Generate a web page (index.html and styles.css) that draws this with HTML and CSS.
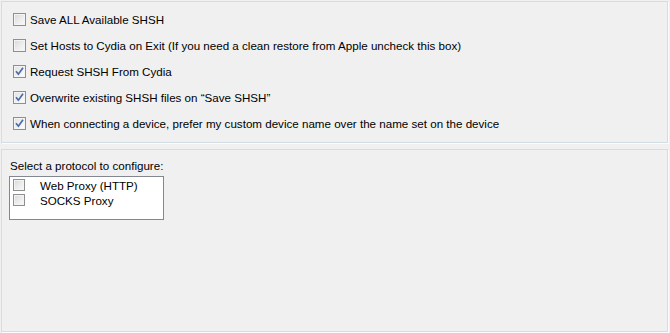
FILE: index.html
```html
<!DOCTYPE html>
<html>
<head>
<meta charset="utf-8">
<link rel="stylesheet" href="styles.css">
</head>
<body>
<div class="page">
  <section class="panel options">
    <label class="row"><span class="cb"></span><span class="txt">Save ALL Available SHSH</span></label>
    <label class="row"><span class="cb"></span><span class="txt">Set Hosts to Cydia on Exit (If you need a clean restore from Apple uncheck this box)</span></label>
    <label class="row"><span class="cb on"><svg viewBox="0 0 11 11" width="11" height="11"><path d="M2 5.2 L4.4 8.2 L9 1.8" fill="none" stroke="#4a6aa8" stroke-width="1.7" stroke-linejoin="miter"/></svg></span><span class="txt">Request SHSH From Cydia</span></label>
    <label class="row"><span class="cb on"><svg viewBox="0 0 11 11" width="11" height="11"><path d="M2 5.2 L4.4 8.2 L9 1.8" fill="none" stroke="#4a6aa8" stroke-width="1.7" stroke-linejoin="miter"/></svg></span><span class="txt">Overwrite existing SHSH files on “Save SHSH”</span></label>
    <label class="row"><span class="cb on"><svg viewBox="0 0 11 11" width="11" height="11"><path d="M2 5.2 L4.4 8.2 L9 1.8" fill="none" stroke="#4a6aa8" stroke-width="1.7" stroke-linejoin="miter"/></svg></span><span class="txt">When connecting a device, prefer my custom device name over the name set on the device</span></label>
  </section>
  <section class="panel proxy">
    <div class="caption">Select a protocol to configure:</div>
    <div class="listbox">
      <div class="item"><span class="cb small"></span><span class="txt">Web Proxy (HTTP)</span></div>
      <div class="item"><span class="cb small"></span><span class="txt">SOCKS Proxy</span></div>
    </div>
  </section>
</div>
</body>
</html>
```
FILE: styles.css
```css
html, body {
  margin: 0;
  padding: 0;
  background: #f0f0f0;
}
body {
  width: 670px;
  height: 333px;
  overflow: hidden;
  font-family: "Liberation Sans", Arial, sans-serif;
  font-size: 11.6px;
  color: #000;
}
.page {
  display: flex;
  flex-direction: column;
  gap: 6px;
  padding: 1px 2px 0 1px;
}
.panel {
  box-sizing: border-box;
  width: 667px;
  border: 1px solid #d3dde4;
  background: #f0f0f0;
  box-shadow: 1px 1px 0 #fbfcfd;
}
.options {
  height: 142px;
  padding: 11px 0 0 11px;
  display: flex;
  flex-direction: column;
  gap: 13px;
}
.row {
  display: flex;
  align-items: center;
  height: 13px;
  gap: 4px;
}
.cb {
  box-sizing: border-box;
  width: 13px;
  height: 13px;
  border: 1px solid #8e8f8f;
  background: linear-gradient(135deg, #d8d8d8 0%, #ebebeb 50%, #fafafa 100%);
  box-shadow: inset 0 0 0 1px #f4f4f4;
  flex: none;
  display: flex;
  align-items: center;
  justify-content: center;
}
.cb.on {
  background: linear-gradient(135deg, #e2e2e2 0%, #f2f2f2 60%, #ffffff 100%);
}
.cb svg {
  display: block;
}
.txt {
  white-space: nowrap;
  line-height: 13px;
}
.proxy {
  height: 183px;
  padding: 9px 0 0 7px;
}
.caption {
  line-height: 13px;
  height: 13px;
  padding-left: 1px;
}
.listbox {
  box-sizing: border-box;
  margin-top: 4px;
  width: 155px;
  height: 44px;
  border: 1px solid #828790;
  background: #fff;
  padding: 2px 0 0 3px;
  display: flex;
  flex-direction: column;
  gap: 3px;
}
.item {
  display: flex;
  align-items: center;
  height: 12px;
}
.cb.small {
  width: 12px;
  height: 12px;
}
.item .txt {
  margin-left: 15px;
}
```
